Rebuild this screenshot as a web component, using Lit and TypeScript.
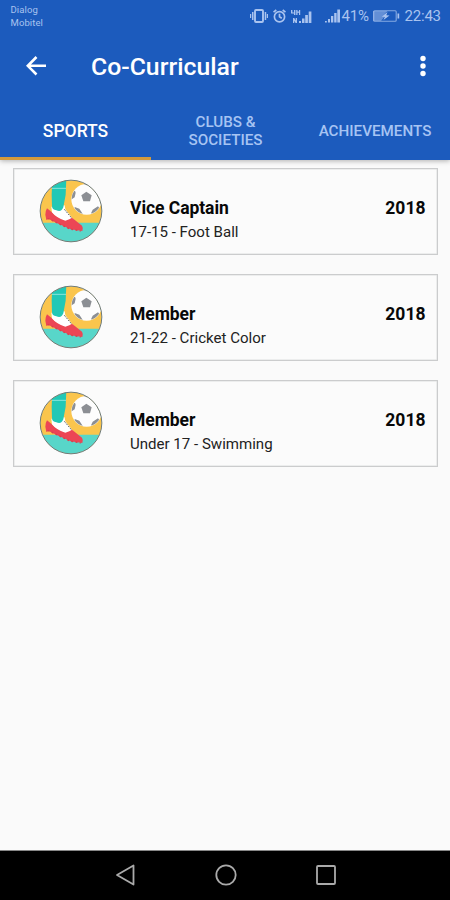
import { LitElement, html, css, svg } from "lit";
import { customElement, property, state } from "lit/decorators.js";
import { classMap } from "lit/directives/class-map.js";

interface Activity {
  role: string;
  detail: string;
  year: string;
}

const ACTIVITIES: Activity[] = [
  { role: "Vice Captain", detail: "17-15 - Foot Ball", year: "2018" },
  { role: "Member", detail: "21-22 - Cricket Color", year: "2018" },
  { role: "Member", detail: "Under 17 - Swimming", year: "2018" },
];

const signalBars = svg`
  <path d="M0 11.500h1.800v1.500H0zM3 9.500h2v3.500H3zM6 6.500h2.300V13H6zM9.200 3.500h2.400V13H9.200zM12.300 0H15v13h-2.700z"/>`;

@customElement("status-bar")
export class StatusBar extends LitElement {
  static styles = css`
    :host { display: flex; justify-content: space-between; height: 34px; color: #a9c3ef; }
    .carriers { padding: 3px 0 0 10.500px; font-size: 9.5px; line-height: 13px; letter-spacing: 0.1px; }
    .indicators { display: flex; align-items: center; height: 32px; padding-right: 9px; font-size: 15px; }
    .indicators svg { display: block; fill: currentColor; }
    .vibrate { margin-right: 5px; }
    .alarm { margin-right: 5px; }
    .lte { margin-right: 13px; }
    .signal { margin-right: 2px; }
    .percent { width: 27px; letter-spacing: -0.2px; }
    .battery { margin: 0 5px 0 4px; }
    .time { width: 36.500px; letter-spacing: -0.2px; }
  `;

  render() {
    return html`
      <div class="carriers"><div>Dialog</div><div>Mobitel</div></div>
      <div class="indicators">
        <svg class="vibrate" width="18" height="14" viewBox="0 0 18 14">
          <rect x="5" y="1" width="8" height="12" rx="1" style="fill:none;stroke:currentColor;stroke-width:1.900" />
          <path d="M2 3h1.500v8H2zM0 5h1.200v4H0zM14.700 3h1.500v8h-1.500zM16.800 5H18v4h-1.200z" />
        </svg>
        <svg class="alarm" width="13" height="14" viewBox="0 0 13 14">
          <g fill="none" stroke="currentColor" stroke-width="1.700">
            <circle cx="6.500" cy="7.800" r="5.100" />
            <path d="M.5 3.200 3.300 1M12.500 3.200 9.700 1M6.500 4.800v3l2.300 1.500" />
          </g>
        </svg>
        <svg class="lte" width="21" height="15" viewBox="0 0 21 15">
          <path d="M0 1h1.400v2.500H3V1h1.400v5H3V4.600H0zM5.200 1h1.300v1.500H8V1h1.200v5H8V3.700H6.500V6H5.200zM2 9h1.300l1.400 2.500V9H6v5H4.600L3.300 11.700V14H2zM8 12h2v2H8zM11 9.500h2.500V14H11zM14.200 6h2.700v8h-2.700zM17.700 2.500h2.700V14h-2.700z" />
        </svg>
        <svg class="signal" width="15" height="14" viewBox="0 0 15 13">${signalBars}</svg>
        <span class="percent">41%</span>
        <svg class="battery" width="27" height="12" viewBox="0 0 27 12">
          <path d="M0 1h14.500L8.500 7l3-.2L8 11H0z" opacity=".5" />
          <rect x=".7" y=".7" width="22.500" height="10.600" rx="1" style="fill:none;stroke:currentColor;stroke-width:1.100;opacity:.75" />
          <path d="M24.500 3.500h1.700v5h-1.700zM14.500 2 8.500 6.800l3.300.2-1.300 3L16.500 5.500l-3.200-.3z" />
        </svg>
        <span class="time">22:43</span>
      </div>
    `;
  }
}

@customElement("sport-badge")
export class SportBadge extends LitElement {
  static styles = css`
    :host { display: block; width: 64px; height: 64px; }
    svg { display: block; }
  `;

  render() {
    return html`
      <svg width="64" height="64" viewBox="27 29 192 192">
        <defs>
          <clipPath id="disc"><circle cx="123" cy="125" r="92" /></clipPath>
          <clipPath id="ball"><circle cx="170" cy="90" r="45" /></clipPath>
        </defs>
        <g clip-path="url(#disc)">
          <path fill="#fac54d" d="M25 25h200v200H25z" />
          <path fill="#58d6c9" d="M25 160h200v65H25z" />
          <circle cx="170" cy="90" r="46" fill="#fdfdfd" />
          <g clip-path="url(#ball)" fill="#8c8f94">
            <path d="m169 67 16 11-5 18h-20l-6-18z" />
            <path d="M122 68l13-4 2 6-3 14-12 8zM155 42l14 6 16-6-4-8h-22zM212 70l-6 11 5 12 10-3V70zM134 113l14 5 10 15-8 8-18-12zM183 132l5-11 16-10 8 10-18 20z" />
          </g>
          <path fill="#fff" d="M64 112l40-4 2 12 20 25q10 10-2 16-38-7-58-31z" />
          <path fill="#22c8b6" d="M67 28h42l-2 48-7 38q-6 16-21 9-13-2-13-12l-1-35z" />
          <path stroke="#8ae5dc" stroke-width="3" d="M66 57h42" />
          <path fill="#ec4655" d="m51 117 13 10q14 18 42 27l12-4 8-5 30 24q5 8 1 16l-35-5-37-17-29-14-7 3-3-16q0-11 5-19z" />
          <path stroke="#d9414f" stroke-width="4" stroke-dasharray="6 7" fill="none" d="m53 147 29 14 38 18 32 6" />
          <path stroke="#53595d" stroke-width="3" stroke-dasharray="5 4" fill="none" d="m103 120 22 26" />
        </g>
        <circle cx="123" cy="125" r="92.500" fill="none" stroke="#6f7b78" stroke-width="3" />
      </svg>
    `;
  }
}

@customElement("activity-card")
export class ActivityCard extends LitElement {
  @property({ attribute: false }) activity!: Activity;

  static styles = css`
    :host { display: flex; box-sizing: border-box; height: 87.500px; border: 1px solid #cbcccd; box-shadow: inset 0 0 0 0.500px #dedfe0; background: #fbfbfb; padding: 10.500px 11.500px 0 25px; color: #080808; }
    .info { flex: 1; padding: 18px 0 0 27px; }
    .role, .year { font-size: 17.500px; line-height: 22px; font-weight: 700; }
    .detail { margin-top: 3px; font-size: 15.050px; line-height: 20px; color: #222; white-space: nowrap; }
    .role { letter-spacing: -0.05px; }
    .year { padding-top: 18px; }
  `;

  render() {
    return html`
      <sport-badge></sport-badge>
      <div class="info">
        <div class="role">${this.activity.role}</div>
        <div class="detail">${this.activity.detail}</div>
      </div>
      <div class="year">${this.activity.year}</div>
    `;
  }
}

@customElement("app-root")
export class AppRoot extends LitElement {
  @state() private selected = 0;

  private tabs = ["SPORTS", "CLUBS & SOCIETIES", "ACHIEVEMENTS"];

  static styles = css`
    :host { display: flex; flex-direction: column; width: 450px; height: 900px; overflow: hidden; background: #fafafa; font-family: Roboto, sans-serif; }
    header { flex: none; height: 160px; background: #1c5bbd; box-shadow: 0 1px 5px rgba(0, 0, 0, 0.3); }
    .toolbar { display: flex; align-items: center; height: 66px; padding: 0 21px 0 26px; }
    .toolbar svg { display: block; margin-top: -2px; }
    h1 { flex: 1; margin: 0 0 0 45px; color: #fff; font-size: 24.800px; line-height: 30px; font-weight: 500; }
    .tabs { display: grid; grid-template-columns: 151px 149px 150px; height: 60px; }
    .tab { display: flex; align-items: center; justify-content: center; box-sizing: border-box; border: 0; border-bottom: 3px solid transparent; padding: 5px 0 0; background: none; color: #a7c4f3; font: 500 15.200px/18px Roboto, sans-serif; text-align: center; }
    .tab span { width: min-content; }
    .tab.wide span { width: 90px; }
    .tab.active { border-bottom-color: #d39a3c; color: #fff; font-size: 17.500px; }
    main { flex: 1; display: flex; flex-direction: column; gap: 18.700px; padding: 7.500px 12px 0 13px; }
    activity-card { flex: none; }
    nav { flex: none; display: flex; justify-content: center; gap: 78px; height: 49px; box-sizing: border-box; padding: 12px 0 0 1px; background: #000; box-shadow: 0 -1px 0 #888; }
    nav svg { fill: none; stroke: #aaa; stroke-width: 1.800; stroke-linejoin: round; }
  `;

  render() {
    return html`
      <header>
        <status-bar></status-bar>
        <div class="toolbar">
          <svg width="20" height="20" viewBox="0 0 20 20" fill="none" stroke="#fff" stroke-width="2.600"><path d="M10.500 1 1.800 9.800l8.700 8.700M2 9.800h18" /></svg>
          <h1>Co-Curricular</h1>
          <svg width="12" height="22" viewBox="0 0 12 22" fill="#fff"><circle cx="6" cy="3.500" r="2.700" /><circle cx="6" cy="11" r="2.700" /><circle cx="6" cy="18.500" r="2.700" /></svg>
        </div>
        <div class="tabs">
          ${this.tabs.map(
            (label, i) => html`<button
              class=${classMap({ tab: true, active: i === this.selected, wide: label.includes(" ") })}
              @click=${() => (this.selected = i)}
            ><span>${label}</span></button>`
          )}
        </div>
      </header>
      <main>
        ${ACTIVITIES.map((a) => html`<activity-card .activity=${a}></activity-card>`)}
      </main>
      <nav>
        <svg width="22" height="24" viewBox="0 0 22 24"><path d="M18.500 2.500v19L2 12z" /></svg>
        <svg width="22" height="24" viewBox="0 0 22 24"><circle cx="11" cy="12" r="9.700" /></svg>
        <svg width="22" height="24" viewBox="0 0 22 24"><rect x="2" y="3" width="18" height="18" rx="1" /></svg>
      </nav>
    `;
  }
}
